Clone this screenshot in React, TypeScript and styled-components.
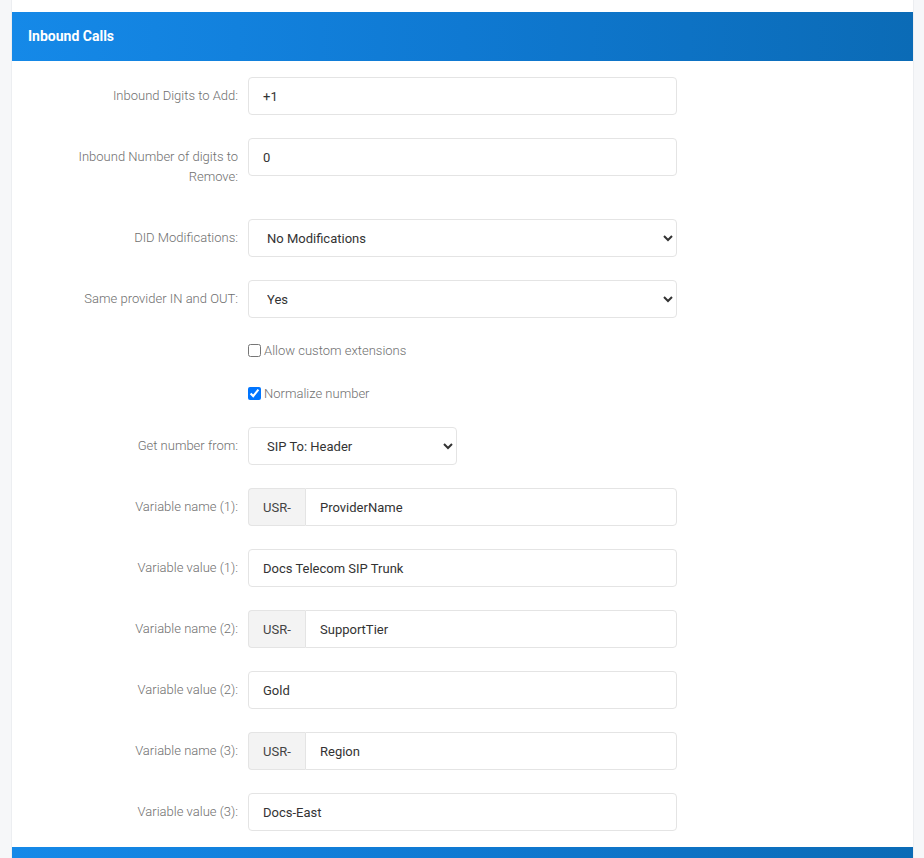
import React from "react";
import styled, { createGlobalStyle } from "styled-components";

const Global = createGlobalStyle`
  html, body { margin: 0; padding: 0; background: #f6f7f9; }
  body { font-family: Roboto, "Noto Sans", "Liberation Sans", sans-serif; }
  * { box-sizing: border-box; }
`;

const Page = styled.div`
  padding: 0 10px 0 11px;
  height: 858px;
  overflow: hidden;
`;

const Card = styled.div`
  background: #ffffff;
  border-left: 1px solid #eceef1;
  border-right: 1px solid #eceef1;
  padding-top: 12px;
`;

const Header = styled.div`
  height: 49px;
  display: flex;
  align-items: center;
  padding: 0 0 1px 16px;
  background: linear-gradient(90deg, #1589e8 0%, #0f79d2 50%, #0b6bb6 100%);
  color: #ffffff;
  font-size: 14px;
  font-weight: 700;
`;

const Form = styled.div`
  padding: 16px 0 16px;
  display: flex;
  flex-direction: column;
  gap: 23px;
`;

const Row = styled.div`
  display: grid;
  grid-template-columns: 226px 429px;
  column-gap: 10px;
  align-items: start;
`;

const Label = styled.label`
  text-align: right;
  font-size: 13px;
  line-height: 20px;
  font-weight: 300;
  color: #6f6f6f;
  padding: 9px 0 9px 50px;
`;

const Input = styled.input`
  height: 38px;
  width: 100%;
  border: 1px solid #e4e4e4;
  border-radius: 4px;
  padding: 0 14px;
  font-family: inherit;
  font-size: 13px;
  color: #333333;
  background: #fff;
  outline: none;
`;

const Select = styled.select<{ $w?: number }>`
  height: 38px;
  width: ${(p) => (p.$w ? `${p.$w}px` : "100%")};
  border: 1px solid #e4e4e4;
  border-radius: 4px;
  padding: 0 4px 0 14px;
  font-family: inherit;
  font-size: 13px;
  color: #333333;
  background: #fff;
  outline: none;
`;

const Group = styled.div`
  display: flex;
  height: 38px;
`;

const Addon = styled.span`
  width: 57px;
  display: flex;
  align-items: center;
  padding-left: 14px;
  background: #f3f3f3;
  border: 1px solid #e4e4e4;
  border-right: none;
  border-radius: 4px 0 0 4px;
  font-size: 13px;
  color: #444;
`;

const GroupInput = styled(Input)`
  flex: 1;
  border-radius: 0 4px 4px 0;
`;

const CheckRow = styled.div`
  display: grid;
  grid-template-columns: 226px 429px;
  column-gap: 10px;
  height: 20px;
  align-items: center;
`;

const CheckLabel = styled.label`
  grid-column: 2;
  display: flex;
  align-items: center;
  margin-top: -1px;
  font-size: 13px;
  font-weight: 300;
  color: #6f6f6f;
  input {
    margin: 0 3px 0 0;
    width: 13px;
    height: 13px;
  }
`;

type Field =
  | { kind: "input"; label: string; value: string }
  | { kind: "select"; label: string; value: string; w?: number }
  | { kind: "group"; label: string; value: string };

const top: Field[] = [
  { kind: "input", label: "Inbound Digits to Add:", value: "+1" },
  { kind: "input", label: "Inbound Number of digits to Remove:", value: "0" },
  { kind: "select", label: "DID Modifications:", value: "No Modifications" },
  { kind: "select", label: "Same provider IN and OUT:", value: "Yes" },
];

const bottom: Field[] = [
  { kind: "select", label: "Get number from:", value: "SIP To: Header", w: 209 },
  { kind: "group", label: "Variable name (1):", value: "ProviderName" },
  { kind: "input", label: "Variable value (1):", value: "Docs Telecom SIP Trunk" },
  { kind: "group", label: "Variable name (2):", value: "SupportTier" },
  { kind: "input", label: "Variable value (2):", value: "Gold" },
  { kind: "group", label: "Variable name (3):", value: "Region" },
  { kind: "input", label: "Variable value (3):", value: "Docs-East" },
];

function FieldRow({ f }: { f: Field }) {
  return (
    <Row>
      <Label>{f.label}</Label>
      {f.kind === "input" && <Input defaultValue={f.value} />}
      {f.kind === "select" && (
        <Select $w={f.w} defaultValue={f.value}>
          <option>{f.value}</option>
        </Select>
      )}
      {f.kind === "group" && (
        <Group>
          <Addon>USR-</Addon>
          <GroupInput defaultValue={f.value} />
        </Group>
      )}
    </Row>
  );
}

export default function App() {
  return (
    <Page>
      <Global />
      <Card>
        <Header>Inbound Calls</Header>
        <Form>
          {top.map((f) => (
            <FieldRow key={f.label} f={f} />
          ))}
          <CheckRow>
            <CheckLabel>
              <input type="checkbox" />
              Allow custom extensions
            </CheckLabel>
          </CheckRow>
          <CheckRow>
            <CheckLabel>
              <input type="checkbox" defaultChecked />
              Normalize number
            </CheckLabel>
          </CheckRow>
          {bottom.map((f) => (
            <FieldRow key={f.label} f={f} />
          ))}
        </Form>
        <Header />
      </Card>
    </Page>
  );
}
